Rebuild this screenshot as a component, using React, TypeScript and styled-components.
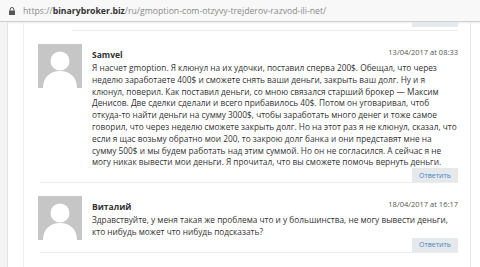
import React from "react";
import styled, { createGlobalStyle } from "styled-components";

const Global = createGlobalStyle`
  html, body {
    margin: 0;
    padding: 0;
    background: #ffffff;
    font-family: "Open Sans", "Liberation Sans", sans-serif;
    overflow: hidden;
  }
`;

// --- Address bar ---
const AddressBar = styled.div`
  height: 21px;
  display: flex;
  align-items: center;
  gap: 8px;
  padding-left: 9px;
  background: #f8f8f8;
  border-bottom: 1px solid #cfcfcf;
  box-shadow: 0 1px 2px rgba(0, 0, 0, 0.08);
`;

const Url = styled.span`
  font-size: 8.7px;
  color: #8a8a8a;

  b {
    color: #333;
    font-weight: 700;
  }
`;

// --- Page ---
const Page = styled.div`
  display: flex;
  height: 245px;
`;

const Gutter = styled.div`
  width: 7px;
  background: #f4f4f4;
  border-right: 1px solid #e3e3e3;
`;

const Margin = styled.div`
  width: 15px;
  border-right: 1px solid #efefef;
`;

const Main = styled.div`
  flex: 1;
  min-width: 0;
  padding: 0 12px 0 14px;
  display: flex;
  flex-direction: column;
`;

const RightEdge = styled.div`
  width: 9px;
  border-left: 1px solid #e6e6e6;
`;

const PrevReply = styled.div`
  align-self: flex-end;
  width: 46px;
  height: 5px;
  background: #e6e9ec;
`;

const Divider = styled.div<{ $indent?: number }>`
  height: 1px;
  background: #ececec;
  margin-left: ${(p) => p.$indent ?? 2}px;
  margin-top: ${(p) => (p.$indent ? 3 : 0)}px;
`;

const Comment = styled.div`
  display: grid;
  grid-template-columns: 44px 1fr;
  column-gap: 10px;
  padding-top: 13px;
`;

const Avatar = styled.div`
  width: 44px;
  height: 44px;
  background: #c6c6c6;
  overflow: hidden;
`;

const Body = styled.div`
  display: flex;
  flex-direction: column;
  min-width: 0;
`;

const Head = styled.div`
  display: flex;
  justify-content: space-between;
  align-items: flex-start;
  height: 15px;
  margin-top: 3px;
`;

const Name = styled.span`
  font-size: 8.5px;
  font-weight: 700;
  color: #333;
  margin-top: 2px;
`;

const Date = styled.span`
  font-size: 7.5px;
  color: #555;
`;

const Text = styled.p`
  margin: 0;
  font-size: 8.3px;
  line-height: 11.8px;
  color: #333;
  white-space: nowrap;
`;

const Reply = styled.div`
  align-self: flex-end;
  width: 46px;
  height: 14px;
  display: flex;
  align-items: center;
  justify-content: center;
  background: #e6e9ec;
  color: #3d86c6;
  font-size: 7px;
`;

const Lock = () => (
  <svg width="6" height="8" viewBox="0 0 6 8">
    <path d="M1.2 3.5V2.3a1.8 1.8 0 0 1 3.6 0v1.2" fill="none" stroke="#555" strokeWidth="1" />
    <rect x="0" y="3.5" width="6" height="4.5" fill="#555" />
  </svg>
);

const Silhouette = () => (
  <svg width="44" height="44" viewBox="0 0 44 44">
    <circle cx="22" cy="17" r="9.5" fill="#fff" />
    <path d="M5 44c0-11 7.5-17 17-17s17 6 17 17z" fill="#fff" />
  </svg>
);

const comments = [
  {
    name: "Samvel",
    date: "13/04/2017 at 08:33",
    lines: [
      "Я насчет gmoption. Я клюнул на их удочки, поставил сперва 200$. Обещал, что через",
      "неделю заработаете 400$ и сможете снять ваши деньги, закрыть ваш долг. Ну и я",
      "клюнул, поверил. Как поставил деньги, со мною связался старший брокер — Максим",
      "Денисов. Две сделки сделали и всего прибавилось 40$. Потом он уговаривал, чтоб",
      "откуда-то найти деньги на сумму 3000$, чтобы заработать много денег и тоже самое",
      "говорил, что через неделю сможете закрыть долг. Но на этот раз я не клюнул, сказал, что",
      "если я щас возьму обратно мои 200, то закрою долг банка и они представят мне на",
      "сумму 500$ и мы будем работать над этим суммой. Но он не согласился. А сейчас я не",
      "могу никак вывести мои деньги. Я прочитал, что вы сможете помочь вернуть деньги.",
    ],
  },
  {
    name: "Виталий",
    date: "18/04/2017 at 16:17",
    lines: [
      "Здравствуйте, у меня такая же проблема что и у большинства, не могу вывести деньги,",
      "кто нибудь может что нибудь подсказать?",
    ],
  },
];

export default function App() {
  return (
    <>
      <Global />
      <AddressBar>
        <Lock />
        <Url>
          https://<b>binarybroker.biz</b>/ru/gmoption-com-otzyvy-trejderov-razvod-ili-net/
        </Url>
      </AddressBar>
      <Page>
        <Gutter />
        <Margin />
        <Main>
          <PrevReply />
          <Divider $indent={34} />
          {comments.map((c) => (
            <React.Fragment key={c.date}>
              <Comment>
                <Avatar>
                  <Silhouette />
                </Avatar>
                <Body>
                  <Head>
                    <Name>{c.name}</Name>
                    <Date>{c.date}</Date>
                  </Head>
                  <Text>
                    {c.lines.map((l, i) => (
                      <React.Fragment key={i}>
                        {l}
                        {i < c.lines.length - 1 && <br />}
                      </React.Fragment>
                    ))}
                  </Text>
                  <Reply>Ответить</Reply>
                </Body>
              </Comment>
              <Divider />
            </React.Fragment>
          ))}
        </Main>
        <RightEdge />
      </Page>
    </>
  );
}
